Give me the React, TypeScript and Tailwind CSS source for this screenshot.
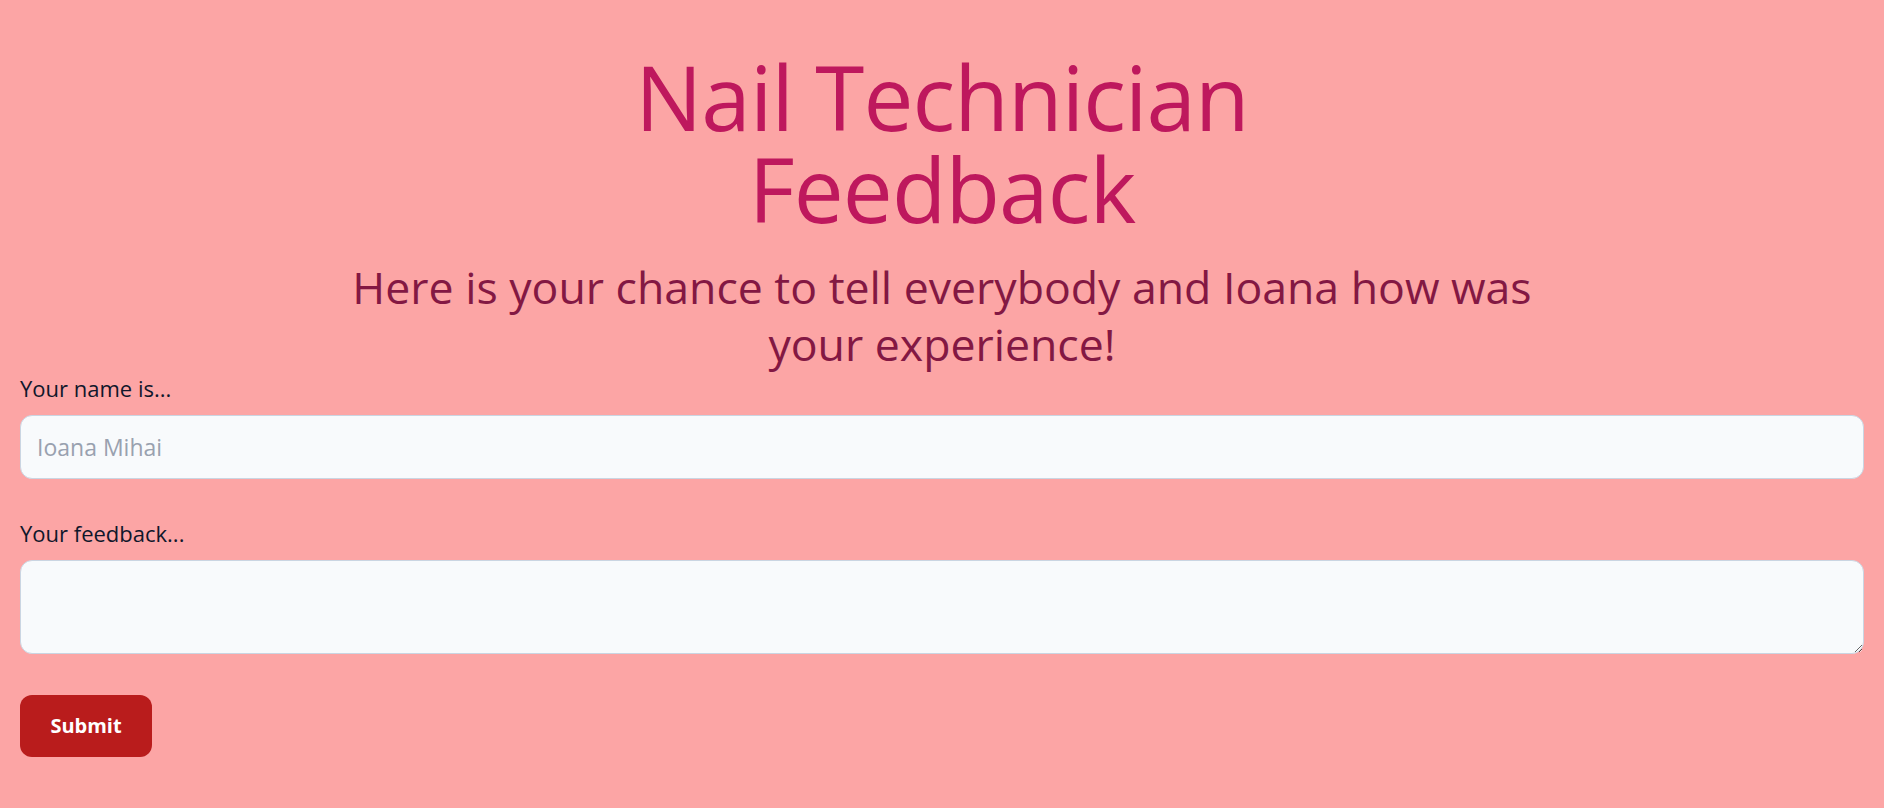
import React from "react";

const font = { fontFamily: '"Open Sans", "Noto Sans", sans-serif' };

export default function App() {
    return (
        <div className="min-h-screen bg-[#fca5a5] pt-[51px] pb-10" style={font}>
            <header className="text-center">
                <h1 className="text-[89px] leading-[92px] tracking-[-0.01em] text-[#be185d] font-normal">
                    Nail Technician
                    <br />
                    Feedback
                </h1>
                <p className="mt-[23px] text-[44.6px] leading-[57px] text-[#831843]">
                    Here is your chance to tell everybody and Ioana how was
                    <br />
                    your experience!
                </p>
            </header>

            <form className="mt-[2px] px-5" onSubmit={(e) => e.preventDefault()}>
                <label htmlFor="name" className="block text-[22px] leading-[28px] text-slate-900 mb-[13px]">
                    Your name is...
                </label>
                <input
                    id="name"
                    type="text"
                    placeholder="Ioana Mihai"
                    className="block w-full h-16 px-4 rounded-xl border border-slate-300 bg-slate-50 text-[23px] text-slate-900 placeholder:text-gray-400 outline-none"
                />

                <label htmlFor="feedback" className="block mt-10 text-[22px] leading-[28px] text-slate-900 mb-[13px]">
                    Your feedback...
                </label>
                <textarea
                    id="feedback"
                    className="block w-full h-[94px] px-4 py-3 rounded-xl border border-slate-300 bg-slate-50 text-[22px] text-slate-900 outline-none"
                />

                <button
                    type="submit"
                    className="mt-[41px] w-[132px] h-[62px] rounded-xl bg-[#b91c1c] text-white text-[20px] font-bold"
                >
                    Submit
                </button>
            </form>
        </div>
    );
}
